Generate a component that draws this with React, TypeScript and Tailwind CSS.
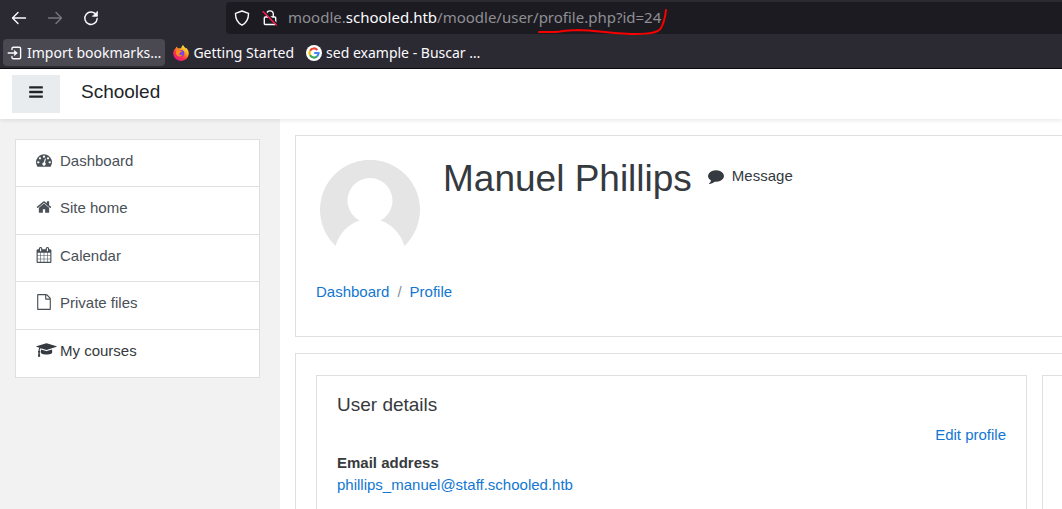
import type { ReactNode } from "react";

type IconProps = { d: string; box?: string; className?: string };

function Glyph({ d, box = "0 0 1792 1792", className = "size-4" }: IconProps) {
  return (
    <svg viewBox={box} className={className} fill="currentColor" aria-hidden="true">
      <path d={d} />
    </svg>
  );
}

const GAUGE =
  "M384 1152q0-53-37.5-90.5t-90.5-37.5-90.5 37.5-37.5 90.5 37.5 90.5 90.5 37.5 90.5-37.5 37.5-90.5zm192-448q0-53-37.5-90.5t-90.5-37.5-90.5 37.5-37.5 90.5 37.5 90.5 90.5 37.5 90.5-37.5 37.5-90.5zm428 481l101-382q6-26-7.5-48.5t-38.5-29.5-48 6.5-30 39.5l-101 382q-60 5-107 43.5t-63 98.5q-20 77 20 146t117 89 146-20 89-117q16-60-6-117t-72-91zm660-33q0-53-37.5-90.5t-90.5-37.5-90.5 37.5-37.5 90.5 37.5 90.5 90.5 37.5 90.5-37.5 37.5-90.5zm-640-640q0-53-37.5-90.5t-90.5-37.5-90.5 37.5-37.5 90.5 37.5 90.5 90.5 37.5 90.5-37.5 37.5-90.5zm448 192q0-53-37.5-90.5t-90.5-37.5-90.5 37.5-37.5 90.5 37.5 90.5 90.5 37.5 90.5-37.5 37.5-90.5zm320 448q0 261-141 483-19 29-54 29h-1402q-35 0-54-29-141-221-141-483 0-182 71-348t191-286 286-191 348-71 348 71 286 191 191 286 71 348z";
const HOME =
  "M1472 992v480q0 26-19 45t-45 19h-384v-384h-256v384h-384q-26 0-45-19t-19-45v-480q0-1 .5-3t.5-3l575-474 575 474q1 2 1 6zm223-69l-62 74q-8 9-21 11h-3q-13 0-21-7l-692-577-692 577q-12 8-24 7-13-2-21-11l-62-74q-8-10-7-23.5t11-21.5l719-599q32-26 76-26t76 26l244 204v-195q0-14 9-23t23-9h192q14 0 23 9t9 23v408l219 182q10 8 11 21.5t-7 23.5z";
const CALENDAR =
  "M192 1664h288v-288h-288v288zm352 0h320v-288h-320v288zm-352-352h288v-320h-288v320zm352 0h320v-320h-320v320zm-352-384h288v-288h-288v288zm736 736h320v-288h-320v288zm-384-736h320v-288h-320v288zm768 736h288v-288h-288v288zm-384-352h320v-320h-320v320zm-352-864v-288q0-13-9.5-22.5t-22.5-9.5h-64q-13 0-22.5 9.5t-9.5 22.5v288q0 13 9.5 22.5t22.5 9.5h64q13 0 22.5-9.5t9.5-22.5zm736 864h288v-320h-288v320zm-384-384h320v-288h-320v288zm384 0h288v-288h-288v288zm32-480v-288q0-13-9.5-22.5t-22.5-9.5h-64q-13 0-22.5 9.5t-9.5 22.5v288q0 13 9.5 22.5t22.5 9.5h64q13 0 22.5-9.5t9.5-22.5zm384-64v1280q0 52-38 90t-90 38h-1408q-52 0-90-38t-38-90v-1280q0-52 38-90t90-38h128v-96q0-66 47-113t113-47h64q66 0 113 47t47 113v96h384v-96q0-66 47-113t113-47h64q66 0 113 47t47 113v96h128q52 0 90 38t38 90z";
const FILE =
  "M1596 380q28 28 48 76t20 88v1152q0 40-28 68t-68 28h-1344q-40 0-68-28t-28-68v-1600q0-40 28-68t68-28h896q40 0 88 20t76 48zm-444-244v376h376q-10-29-22-41l-313-313q-12-12-41-22zm384 1528v-1024h-416q-40 0-68-28t-28-68v-416h-768v1536h1280z";
const CAP =
  "M1774 836l18 316q4 69-82 128t-235 93.5-323 34.5-323-34.5-235-93.5-82-128l18-316 574 181q22 7 48 7t48-7zm530-324q0 23-22 31l-1120 352q-4 1-10 1t-10-1l-652-206q-43 34-71 111.5t-34 178.5q63 36 63 109 0 69-58 107l58 433q2 14-8 25-9 11-24 11h-192q-15 0-24-11-10-11-8-25l58-433q-58-38-58-107 0-73 65-111 11-207 98-330l-333-104q-22-8-22-31t22-31l1120-352q4-1 10-1t10 1l1120 352q22 8 22 31z";
const COMMENT =
  "M1792 896q0 174-120 321.5t-326 233-450 85.5q-70 0-145-8-198 175-460 242-49 14-114 22-17 2-30.5-9t-17.5-29v-1q-3-4-.5-12t2-10 4.500-9.500l6-9 7-8.500 8-9q7-8 31-34.500t34.500-38 31-39.500 32.500-51 27-59 26-76q-157-89-247.500-220t-90.500-281q0-174 120-321.500t326-233 450-85.500 450 85.500 326 233 120 321.500z";
const BARS =
  "M1664 1344v128q0 26-19 45t-45 19h-1408q-26 0-45-19t-19-45v-128q0-26 19-45t45-19h1408q26 0 45 19t19 45zm0-512v128q0 26-19 45t-45 19h-1408q-26 0-45-19t-19-45v-128q0-26 19-45t45-19h1408q26 0 45 19t19 45zm0-512v128q0 26-19 45t-45 19h-1408q-26 0-45-19t-19-45v-128q0-26 19-45t45-19h1408q26 0 45 19t19 45z";

function Line({ children, className = "size-4" }: { children: ReactNode; className?: string }) {
  return (
    <svg
      viewBox="0 0 16 16"
      className={className}
      fill="none"
      stroke="currentColor"
      strokeWidth="1.4"
      strokeLinecap="round"
      strokeLinejoin="round"
      aria-hidden="true"
    >
      {children}
    </svg>
  );
}

function FirefoxLogo() {
  return (
    <svg viewBox="0 0 16 16" className="size-4" aria-hidden="true">
      <defs>
        <linearGradient id="flame" x1="0.85" y1="0.05" x2="0.2" y2="0.95">
          <stop offset="0" stopColor="#fff44f" />
          <stop offset="0.35" stopColor="#ffa01e" />
          <stop offset="0.65" stopColor="#ff3647" />
          <stop offset="1" stopColor="#e31587" />
        </linearGradient>
      </defs>
      <path
        d="M2.700 3.200C3.200 2.700 3.400 2.200 3.600 1.600c.5 1 1.200 1.600 2 2 .9-.3 1.700-.3 2.500-.1C8.300 2 9.200.8 10.300.1c.2 1.500 1.300 2.300 2.600 3.300.1-.2.1-.4 0-.7 1.700 1.300 2.900 3.300 2.900 5.600 0 4.300-3.500 7.600-7.800 7.600S.2 12.500.2 8.300c0-2 .9-3.900 2.500-5.100z"
        fill="url(#flame)"
      />
      <circle cx="8" cy="8.300" r="3.300" fill="#7542e5" />
      <path
        d="M3.600 5c1.300-.4 2.700 0 3.600.8l1.900.3c-.2.8-1.100 1.100-2 1.500.1.900-.6 1-1.300 1.500.8.9 2.400 1.200 3.800.4-1 2.300-4.700 2.700-6.100.2-.8-1.600-.7-3.300.1-4.700z"
        fill="#ff8a1a"
      />
    </svg>
  );
}

function GoogleLogo() {
  return (
    <svg viewBox="0 0 16 16" className="size-4" aria-hidden="true">
      <circle cx="8" cy="8" r="8" fill="#fff" />
      <g fill="none" strokeWidth="2.200">
        <path d="M4.080 5.740A4.530 4.530 0 0 1 11.300 4.900" stroke="#ea4335" />
        <path d="M4.080 10.260A4.530 4.530 0 0 1 4.080 5.740" stroke="#fbbc05" />
        <path d="M11 11.400A4.530 4.530 0 0 1 4.080 10.260" stroke="#34a853" />
        <path d="M8.200 8H12.500A4.530 4.530 0 0 1 11 11.400" stroke="#4285f4" />
      </g>
    </svg>
  );
}

function BrowserChrome() {
  return (
    <header className="border-b border-[#0c0c0d] bg-[#2b2a33] font-['Noto_Sans',sans-serif] text-[#fbfbfe]">
      <div className="flex h-9 items-center pb-px text-[15px]">
        <div className="flex w-[226px] shrink-0 items-center gap-5 pl-[11px]">
          <button type="button" aria-label="Back">
            <Line>
              <path d="M14.500 8H1.700M7 2.500 1.500 8 7 13.500" />
            </Line>
          </button>
          <button type="button" aria-label="Forward" className="text-[#77767d]">
            <Line>
              <path d="M1.500 8h12.800M9 2.500 14.500 8 9 13.500" />
            </Line>
          </button>
          <button type="button" aria-label="Reload">
            <Line>
              <path d="M13.300 5A6.200 6.200 0 1 0 14.200 8.500" />
              <path d="M14.400 1.700v4.600H9.800z" fill="currentColor" strokeWidth="0.800" />
            </Line>
          </button>
        </div>
        <div className="relative flex h-8 flex-1 items-center rounded-l bg-[#1c1b22] pl-2">
          <button type="button" aria-label="Tracking protection" className="mr-3">
            <Line>
              <path d="M8 1 14.500 3.300C14.600 8.500 12.300 12.800 8 15.200 3.700 12.800 1.400 8.500 1.500 3.300z" />
            </Line>
          </button>
          <button type="button" aria-label="Connection is not secure" className="mr-2.5">
            <Line>
              <path d="M4.700 7V4.200a3.300 3.300 0 0 1 6.600 0V7M3.200 7h9.600q.9 0 .9.900v5.700q0 .9-.9.900H3.200q-.9 0-.9-.9V7.900q0-.9.9-.9z" />
              <path d="M2.500 1.400 15 14" stroke="#1c1b22" strokeWidth="1.600" />
              <path d="M1.200 1.800 14.300 15" stroke="#ff1a4b" strokeWidth="1.500" />
            </Line>
          </button>
          <div role="textbox" aria-label="Address" tabIndex={0} className="whitespace-nowrap text-[#8f8f94]">
            moodle.<span className="text-[#fbfbfe]">schooled.htb</span>/moodle/user/profile.php?id=24
          </div>
          <svg
            viewBox="0 0 132 30"
            className="absolute top-1 left-[311px] h-[30px] w-[132px]"
            fill="none"
            stroke="#f60000"
            strokeWidth="2"
            strokeLinecap="round"
            aria-hidden="true"
          >
            <path d="M2 26C10 26 17 26.500 23 25.500C30 24 36 24.500 41 24C60 24.500 80 28 99 28C112 28 121 27 124 22C128 15 128 10 129 4" />
          </svg>
        </div>
      </div>
      <nav aria-label="Bookmarks" className="flex h-8 items-start gap-2 pt-[3px] pl-[3px] text-sm">
        <button type="button" className="flex h-[27px] items-center gap-1 rounded bg-[#4a4952] px-1 whitespace-nowrap">
          <Line>
            <path d="M5 4.500V3.500q0-1.300 1.300-1.300h6q1.300 0 1.300 1.300v9q0 1.300-1.300 1.300h-6Q5 13.800 5 12.500V11.500M1.200 8h8" />
            <path d="M7.700 5.700 10.300 8 7.700 10.300z" fill="currentColor" strokeWidth="0.800" />
          </Line>
          Import bookmarks…
        </button>
        <button type="button" className="flex h-[27px] items-center gap-1 whitespace-nowrap">
          <FirefoxLogo />
          Getting Started
        </button>
        <button type="button" className="ml-1 flex h-[27px] items-center gap-1 whitespace-nowrap">
          <GoogleLogo />
          sed example - Buscar …
        </button>
      </nav>
    </header>
  );
}

const menu = [
  { label: "Dashboard", d: GAUGE },
  { label: "Site home", d: HOME },
  { label: "Calendar", d: CALENDAR },
  { label: "Private files", d: FILE },
  { label: "My courses", d: CAP, wide: true },
];

function Sidebar() {
  return (
    <aside className="w-[280px] shrink-0 bg-[#f2f2f2] pt-5 pr-5 pl-[15px]">
      <nav
        aria-label="Site"
        className="grid h-[239px] auto-rows-fr divide-y divide-[#dfdfdf] border border-[#dfdfdf] bg-white"
      >
        {menu.map(({ label, d, wide }) => (
          <a
            key={label}
            href="#"
            className={`flex items-start px-5 pt-2.5 leading-[22px] ${wide ? "text-[#343a40]" : "text-[#495057]"}`}
          >
            <span className="mt-0.5 flex w-6 shrink-0">
              {wide ? <Glyph d={d} box="0 0 2304 1792" className="h-4 w-[21px]" /> : <Glyph d={d} />}
            </span>
            {label}
          </a>
        ))}
      </nav>
    </aside>
  );
}

function ProfileHeader() {
  return (
    <section className="h-[202px] border border-r-0 border-[#dfdfdf] pt-6 pl-5">
      <div className="flex items-start pl-1">
        <svg viewBox="0 0 100 100" className="size-[100px] shrink-0" role="img" aria-label="Manuel Phillips">
          <path
            d="M15.500 86A50 50 0 1 1 84.500 86C80.500 73 71.500 64 60.500 60.500A22.500 22.500 0 1 0 39.500 60.500C28.500 64 19.500 73 15.500 86z"
            fill="#e5e5e5"
          />
        </svg>
        <h1 className="ml-[23px] text-[37px] leading-[38px] whitespace-nowrap text-[#343a40]">Manuel Phillips</h1>
        <a href="#" className="mt-[5px] ml-4 flex items-center gap-2 leading-[22px] text-[#343a40]">
          <Glyph d={COMMENT} />
          Message
        </a>
      </div>
      <nav aria-label="Breadcrumb" className="mt-[21px] flex gap-2 leading-[22px] text-[#1177d1]">
        <a href="#">Dashboard</a>
        <span className="text-[#868e96]">/</span>
        <a href="#">Profile</a>
      </nav>
    </section>
  );
}

function UserDetails() {
  return (
    <section className="mt-4 flex flex-1 gap-[15px] border-t border-l border-[#dfdfdf] pt-[21px] pl-5">
      <div className="flex-1 border border-b-0 border-[#dfdfdf] px-5 pt-[18px] leading-[22px]">
        <h3 className="text-[19px]">User details</h3>
        <div className="mt-2 text-right">
          <a href="#" className="text-[#1177d1]">
            Edit profile
          </a>
        </div>
        <dl className="mt-1.5">
          <dt className="font-bold">Email address</dt>
          <dd>
            <a href="#" className="text-[#1177d1]">
              phillips_manuel@staff.schooled.htb
            </a>
          </dd>
        </dl>
      </div>
      <div className="w-5 shrink-0 border-t border-l border-[#dfdfdf]" />
    </section>
  );
}

export default function App() {
  return (
    <div className="flex min-h-screen flex-col overflow-hidden bg-white">
      <BrowserChrome />
      <div className="flex flex-1 flex-col font-['Liberation_Sans',Arial,sans-serif] text-[15px] text-[#373a3c]">
        <div className="relative flex h-[50px] items-start bg-white pl-3 shadow-[0_2px_4px_rgba(0,0,0,0.08)]">
          <button
            type="button"
            aria-label="Side panel"
            className="mt-1.5 flex h-[38px] w-12 items-center justify-center bg-[#e9ecef] pb-1 text-[#212529]"
          >
            <Glyph d={BARS} />
          </button>
          <a href="#" className="mt-[11px] ml-[21px] text-[19px] leading-6 text-[#212529]">
            Schooled
          </a>
        </div>
        <div className="flex flex-1">
          <Sidebar />
          <main className="flex min-w-0 flex-1 flex-col pt-4 pl-[15px]">
            <ProfileHeader />
            <UserDetails />
          </main>
        </div>
      </div>
    </div>
  );
}
